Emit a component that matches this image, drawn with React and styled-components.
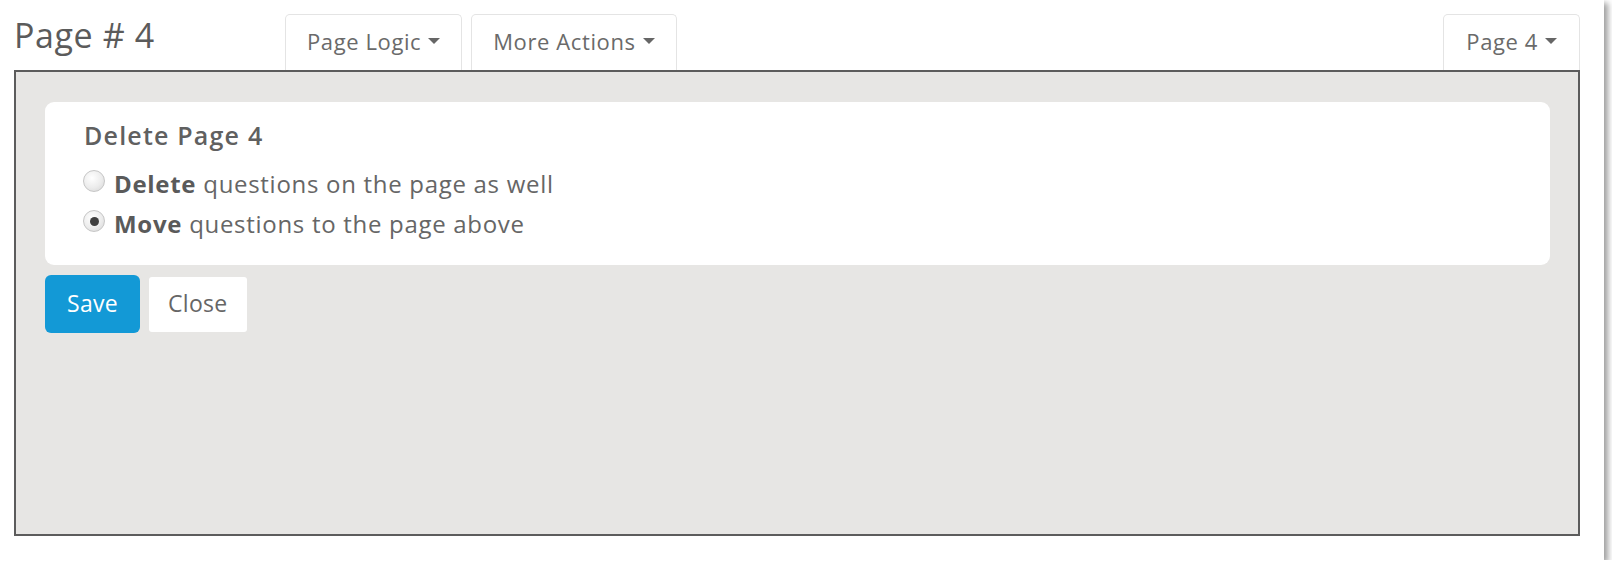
import React, { useState } from 'react';
import styled, { createGlobalStyle } from 'styled-components';

const GlobalStyle = createGlobalStyle`
  html, body {
    margin: 0;
    padding: 0;
    background: #ffffff;
  }
  body {
    font-family: 'Open Sans', 'Noto Sans', 'Liberation Sans', sans-serif;
    color: #555;
  }
`;

const Frame = styled.div`
  box-sizing: border-box;
  width: 1604px;
  height: 560px;
  padding: 13px 0 0 14px;
  background: #ffffff;
  box-shadow: 4px 3px 6px rgba(0, 0, 0, 0.38);
`;

const Header = styled.div`
  display: flex;
  align-items: flex-end;
  width: 1566px;
  height: 57px;
`;

const Title = styled.h1`
  flex: none;
  width: 271px;
  margin: 0;
  align-self: flex-start;
  font-size: 34px;
  font-weight: 400;
  line-height: 44px;
  letter-spacing: 0.6px;
  color: #5b5b5b;
`;

const TabButton = styled.button`
  box-sizing: border-box;
  display: flex;
  align-items: center;
  height: 56px;
  margin-left: ${p => (p.$right ? 'auto' : p.$first ? '0' : '9px')};
  padding: 0 ${p => p.$pad || 21}px 4px;
  background: #ffffff;
  border: 1px solid #e4e4e4;
  border-bottom: none;
  border-radius: 5px 5px 0 0;
  font-family: inherit;
  font-size: 22px;
  letter-spacing: 0.6px;
  color: #6a6a6a;
  cursor: pointer;
`;

const Caret = styled.span`
  display: inline-block;
  width: 0;
  height: 0;
  margin-left: 7px;
  border-left: 6px solid transparent;
  border-right: 6px solid transparent;
  border-top: 6px solid #666;
`;

const Panel = styled.div`
  box-sizing: border-box;
  width: 1566px;
  height: 466px;
  padding: 30px 28px 0 29px;
  background: #e7e6e4;
  border: 2px solid #5c5c5c;
`;

const Card = styled.div`
  box-sizing: border-box;
  height: 163px;
  padding: 15px 39px 0;
  background: #ffffff;
  border-radius: 9px;
`;

const CardTitle = styled.h2`
  margin: 0 0 10px;
  font-size: 25px;
  font-weight: 600;
  line-height: 36px;
  letter-spacing: 1.2px;
  color: #606060;
`;

const Option = styled.label`
  display: flex;
  align-items: center;
  height: 40px;
  font-size: 24px;
  letter-spacing: 0.7px;
  color: #666;
  cursor: pointer;

  b {
    font-weight: 700;
    color: #5a5a5a;
    margin-right: 7px;
  }
`;

const Radio = styled.span`
  box-sizing: border-box;
  flex: none;
  position: relative;
  width: 22px;
  height: 22px;
  margin: -4px 9px 0 -1px;
  border-radius: 50%;
  border: 1px solid #c6c6c6;
  background: radial-gradient(circle at 40% 35%, #ffffff 0%, #ececec 55%, #d4d4d4 100%);

  &::after {
    content: '';
    display: ${p => (p.$checked ? 'block' : 'none')};
    position: absolute;
    left: 50%;
    top: 50%;
    width: 9px;
    height: 9px;
    margin: -4.5px 0 0 -4.5px;
    border-radius: 50%;
    background: #3f3f3f;
  }
`;

const Actions = styled.div`
  display: flex;
  align-items: center;
  gap: 9px;
  margin-top: 10px;
`;

const ActionButton = styled.button`
  box-sizing: border-box;
  height: ${p => (p.$primary ? 58 : 55)}px;
  padding: 0 ${p => (p.$primary ? 22 : 19)}px 2px;
  border: none;
  border-radius: ${p => (p.$primary ? 6 : 3)}px;
  background: ${p => (p.$primary ? '#1399d6' : '#ffffff')};
  color: ${p => (p.$primary ? '#ffffff' : '#666')};
  font-family: inherit;
  font-size: 23px;
  letter-spacing: 0.3px;
  cursor: pointer;
`;

const options = [
  { id: 'delete', bold: 'Delete', rest: 'questions on the page as well' },
  { id: 'move', bold: 'Move', rest: 'questions to the page above' }
];

export default function App() {
  const [choice, setChoice] = useState('move');

  return (
    <>
      <GlobalStyle />
      <Frame>
        <Header>
          <Title>Page # 4</Title>
          <TabButton $first>
            Page Logic
            <Caret />
          </TabButton>
          <TabButton>
            More Actions
            <Caret />
          </TabButton>
          <TabButton $right $pad={22}>
            Page 4
            <Caret />
          </TabButton>
        </Header>
        <Panel>
          <Card>
            <CardTitle>Delete Page 4</CardTitle>
            {options.map(o => (
              <Option key={o.id} onClick={() => setChoice(o.id)}>
                <Radio $checked={choice === o.id} />
                <b>{o.bold}</b>
                {o.rest}
              </Option>
            ))}
          </Card>
          <Actions>
            <ActionButton $primary>Save</ActionButton>
            <ActionButton>Close</ActionButton>
          </Actions>
        </Panel>
      </Frame>
    </>
  );
}
